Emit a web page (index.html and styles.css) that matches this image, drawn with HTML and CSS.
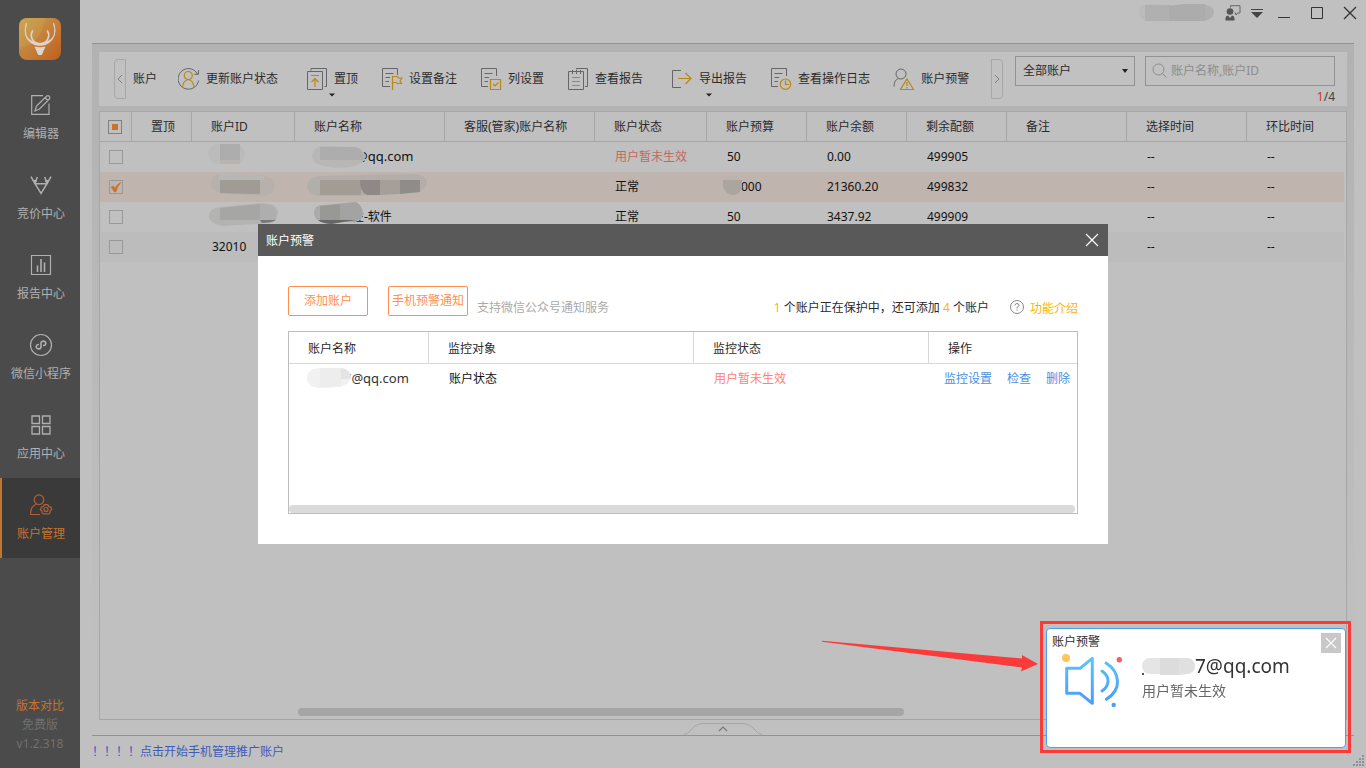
FILE: index.html
```html
<!DOCTYPE html>
<html lang="zh-CN">
<head>
<meta charset="utf-8">
<title>账户管理</title>
<link rel="stylesheet" href="styles.css">
</head>
<body>
<div class="app">
  <aside class="sidebar">
    <svg class="logo" viewBox="0 0 42 42" aria-hidden="true">
      <defs><linearGradient id="lg" x1="0" y1="0" x2="1" y2="1"><stop offset="0" stop-color="#c9a34e"/><stop offset=".5" stop-color="#c5803a"/><stop offset="1" stop-color="#be5f1d"/></linearGradient></defs>
      <rect width="42" height="42" rx="8" fill="url(#lg)"/>
      <path d="M0 30Q20 28 27 0H8Q0 0 0 8z" fill="#d0b060" opacity=".25"/>
      <path d="M7.500 5C3.500 17 9 27 21 27.500C33 27 38.500 17 34.500 5L36 12Q36 24 21 25.300Q6 24 6.300 12z" fill="#dcd6cf" stroke="#dcd6cf" stroke-width=".8" stroke-linejoin="round"/>
      <path d="M13.500 13C10.500 18 13 24 20 26.300M28.500 13C31.500 18 29 24 22 26.300" fill="none" stroke="#dcd6cf" stroke-width="1.500" stroke-linecap="round"/>
      <path d="M15.500 28.500Q21 30 26.500 28.500L22.800 37H19.200z" fill="#dcd6cf"/>
    </svg>
    <nav class="nav">
      <a class="nav-item" href="#"><svg class="nav-icon" viewBox="0 0 24 24"><path d="M14 2.700H2.700V21.300H20V10.500M6 18L7.500 13L17.500 3.200Q19 2 20.500 3.500Q21.500 5 20.300 6L10.500 16zM16 4.700L19 7.500"/></svg>编辑器</a>
      <a class="nav-item" href="#"><svg class="nav-icon" viewBox="0 0 24 24"><path stroke-width="1.500" d="M2 3.700L6 10.700H18L12 20.300L6 10.700M22 3.700L18 10.700M8.300 4L6 10M3 6.500L8 8.500M15.700 4L18 10M21 6.500L16 8.500"/></svg>竞价中心</a>
      <a class="nav-item" href="#"><svg class="nav-icon" viewBox="0 0 24 24"><path d="M2.500 2.500H21.500V21.500H2.500z"/><path stroke-width="1.600" d="M8.500 12.500V19M12 6V19M15.500 9.500V19"/></svg>报告中心</a>
      <a class="nav-item" href="#"><svg class="nav-icon" viewBox="0 0 24 24"><circle cx="12" cy="12" r="10.500"/><path stroke-width="1.600" d="M10 11.500A2.400 2.200 0 1 0 12 14V10A2.400 2.200 0 1 1 14 12.500"/></svg>微信小程序</a>
      <a class="nav-item" href="#"><svg class="nav-icon" viewBox="0 0 24 24"><path stroke-width="1.300" d="M3 3H10.500V10.500H3zM13.500 3H21V10.500H13.500zM3 13.500H10.500V21H3zM13.500 13.500H21V21H13.500z"/></svg>应用中心</a>
      <a class="nav-item active" href="#"><svg class="nav-icon" viewBox="0 0 24 24"><circle cx="10" cy="6.700" r="4.800"/><path d="M11 21.500H1.500Q1.500 13 7.500 11.200"/><path d="M15.200 11.700H18.800L19.700 13.600L22 14L22.700 16.500L21.200 18L20.800 20.500L18.500 21.200L17 20.500L15 21.200L13.200 20L12.900 18L11.400 16.500L12.500 14L14.500 13.600z"/><circle cx="17" cy="16.500" r="2"/></svg>账户管理</a>
    </nav>
    <div class="version"><a class="compare" href="#">版本对比</a><span>免费版</span><span>v1.2.318</span></div>
  </aside>

  <main class="main">
    <header class="titlebar">
      <svg class="user-mask" viewBox="0 0 80 20" aria-hidden="true"><path d="M10 2Q2 3 2 10T10 18H68Q78 17 77 9Q75 3 66 2Q50 1 36 3Z" fill="#bbb"/><path d="M8 3H34V19H8z" fill="#b0b0b0"/><path d="M32 4L48 2H68V19H32z" fill="#acacac"/><path d="M68 3Q77 4 77 10T68 19z" fill="#b0b0b0"/></svg>
      <button class="win-btn feedback" aria-label="反馈"><svg viewBox="0 0 16 16"><circle cx="5" cy="6.500" r="3.300" fill="#555"/><path d="M.5 15.500Q0 11 3 10.500L5 13L7 10.500Q10 11 9.500 15.500z" fill="#555"/><path d="M5.500 2.500V.7H15V8H12.500L11 10L10 7.500" fill="none" stroke="#666"/></svg></button>
      <button class="win-btn" aria-label="菜单"><svg viewBox="0 0 16 16"><path d="M2 4.500H14" stroke="#444"/><path d="M2 7H14L8 13z" fill="#444"/></svg></button>
      <button class="win-btn" aria-label="最小化"><svg viewBox="0 0 16 16"><path d="M2 12.500H14" stroke="#333"/></svg></button>
      <button class="win-btn" aria-label="最大化"><svg viewBox="0 0 16 16"><path d="M2.500 2.500H13.500V13.500H2.500z" fill="none" stroke="#333"/></svg></button>
      <button class="win-btn" aria-label="关闭窗口"><svg viewBox="0 0 16 16"><path d="M2 2L14 14M14 2L2 14" stroke="#333" stroke-width="1.300"/></svg></button>
    </header>

    <section class="panel">
      <div class="toolbar">
        <button class="scroll-btn prev" aria-label="向左"><svg viewBox="0 0 6 10"><path d="M5 1L1 5L5 9"/></svg></button>
        <div class="tools">
          <button class="tool first">账户</button>
          <button class="tool"><svg class="tool-icon" viewBox="0 0 22 24"><path d="M19.500 7A10.300 10.300 0 1 0 20.600 13.500M20.500 3V7.300H16.300"/><g class="accent"><circle cx="10.300" cy="8.500" r="4"/><path d="M4.500 20.500Q5 13.500 10.300 12.500Q15.500 13.500 16 20.500"/></g></svg>更新账户状态</button>
          <button class="tool has-menu"><svg class="tool-icon" viewBox="0 0 22 24"><path d="M5 3.500V1.500H20.500V19.500H18.500M1.500 4.500H16.500V22.500H1.500z"/><path class="accent" d="M5 8.500H13M9 20V11.500M5.500 15L9 11.500L12.500 15"/></svg>置顶<svg class="caret" viewBox="0 0 6 3"><path d="M0 0H6L3 3z"/></svg></button>
          <button class="tool"><svg class="tool-icon" viewBox="0 0 22 24"><path d="M9 19.500H1.500V1.500H16.500V8M4.500 6.500H12.500M4.500 10.500H9M4.500 14.500H8"/><path class="accent" d="M11.500 23V9.500H16L17.500 11H21L19 14L20.500 16.500H16.500L15 15.500H11.500"/></svg>设置备注</button>
          <button class="tool"><svg class="tool-icon" viewBox="0 0 22 24"><path d="M8 19.500H1.500V1.500H16.500V9M4.500 6.500H12.500M4.500 10.500H9M4.500 14.500H8"/><path class="accent" d="M10.500 12.500H20.500V22.500H10.500zM13 17L15 19L18.500 15.500"/></svg>列设置</button>
          <button class="tool"><svg class="tool-icon" viewBox="0 0 22 24"><path d="M9.500 2.500V1.500H20.500V19.500H18M1.500 4.500H16.500V22.500H1.500zM5.500 3V7M9.500 3V7M13.500 3V7"/><path class="accent" d="M5 10.500H13M5 14.500H13M5 18.500H13"/></svg>查看报告</button>
          <button class="tool has-menu"><svg class="tool-icon" viewBox="0 0 22 24"><path d="M10 3.500H1.500V20.500H10"/><path class="accent" d="M7 11.500H20M14.500 6L20 11.500L14.500 17"/></svg>导出报告<svg class="caret" viewBox="0 0 6 3"><path d="M0 0H6L3 3z"/></svg></button>
          <button class="tool"><svg class="tool-icon" viewBox="0 0 22 24"><path d="M8 19.500H1.500V1.500H16.500V9M4.500 6.500H12.500M4.500 10.500H9M4.500 14.500H8"/><g class="accent"><circle cx="15.500" cy="17.200" r="5.200"/><path d="M15.500 13.500V17.500H19"/></g></svg>查看操作日志</button>
          <button class="tool"><svg class="tool-icon" viewBox="0 0 22 24"><circle cx="8" cy="7" r="5"/><path d="M1 19.500Q1 13 5.500 11.500"/><path class="accent" d="M14 12L20.500 22.500H7.500zM14 15V19M14 20V21.500"/></svg>账户预警</button>
        </div>
        <button class="scroll-btn next" aria-label="向右"><svg viewBox="0 0 6 10"><path d="M1 1L5 5L1 9"/></svg></button>
        <div class="filters">
          <div class="select-wrap"><select aria-label="账户筛选"><option>全部账户</option></select><svg class="caret" viewBox="0 0 6 4"><path d="M0 0H6L3 4z"/></svg></div>
          <div class="search-col">
            <div class="search"><svg viewBox="0 0 16 16"><circle cx="6.500" cy="6.500" r="5.500"/><path d="M10.500 10.500L14.500 14.500"/></svg><input type="text" aria-label="搜索账户" placeholder="账户名称,账户ID"></div>
            <div class="pager"><b>1</b>/4</div>
          </div>
        </div>
      </div>

      <div class="grid-box">
        <table class="grid">
          <colgroup><col class="c-check"><col class="c-top"><col class="c-id"><col class="c-name"><col class="c-name"><col class="c-state"><col class="c-num"><col class="c-num"><col class="c-num"><col class="c-time"><col class="c-time"><col></colgroup>
          <thead><tr><th class="check"><input class="box mixed" type="checkbox" aria-label="全选"></th><th>置顶</th><th>账户ID</th><th>账户名称</th><th>客服(管家)账户名称</th><th>账户状态</th><th>账户预算</th><th>账户余额</th><th>剩余配额</th><th>备注</th><th>选择时间</th><th>环比时间</th></tr></thead>
          <tbody>
            <tr><td class="check"><input class="box" type="checkbox" aria-label="选择第1行"></td><td></td>
              <td><svg class="mask" viewBox="0 0 150 30" aria-hidden="true"><rect x="16" y="2" width="37" height="20" rx="10" fill="#bbb"/><path d="M28 2H48V18H28z" fill="#adadad"/><path d="M28 18H48V22H28z" fill="#bab4b0"/></svg></td>
              <td><span class="mail">@qq.com</span><svg class="mask" viewBox="0 0 150 30" aria-hidden="true"><path d="M25 4Q17 7 17 14T28 24L40 26Q68 26 70 16Q70 5 58 5z" fill="#b9b7b6"/><path d="M25 5H60Q69 7 69 18H25z" fill="#adadad"/></svg></td>
              <td></td><td class="bad">用户暂未生效</td><td>50</td><td>0.00</td><td>499905</td><td></td><td>--</td><td>--</td></tr>
            <tr class="selected"><td class="check"><input class="box" type="checkbox" checked aria-label="选择第2行"></td><td></td>
              <td><svg class="mask" viewBox="0 0 150 30" aria-hidden="true"><path d="M28 2L60 3Q82 2 82 13T70 24L32 22Q19 20 19 12T28 2z" fill="#b6b1ad"/><path d="M28 8H68V22L28 21z" fill="#a09b94"/><path d="M28 2L60 3L72 4V8H26z" fill="#b9b7b6"/></svg></td>
              <td><svg class="mask" viewBox="0 0 150 30" aria-hidden="true"><path d="M26 4Q12 6 12 14T26 24H60L122 20Q132 17 132 10Q131 3 120 2z" fill="#b2aeaa"/><path d="M25 8H66V23H25z" fill="#a29d94"/><path d="M65 8H85V23H72Q65 21 65 8z" fill="#8d8986"/><path d="M85 8H105V22L85 23z" fill="#a49f99"/><path d="M105 8H125V20L105 22z" fill="#8f8c89"/></svg></td>
              <td></td><td>正常</td><td><span class="tail">000</span><svg class="mask" viewBox="0 0 150 30" aria-hidden="true"><path d="M16 8H35V15Q33 23 26 23T16 15z" fill="#aaa69f"/><path d="M17 8Q22 4 29 4L35 8z" fill="#bab3ae"/></svg></td><td>21360.20</td><td>499832</td><td></td><td>--</td><td>--</td></tr>
            <tr><td class="check"><input class="box" type="checkbox" aria-label="选择第3行"></td><td></td>
              <td><svg class="mask" viewBox="0 0 150 30" aria-hidden="true"><path d="M28 5L70 1Q86 2 86 10T78 21L32 24Q17 22 17 14T28 5z" fill="#b3b3b2"/><path d="M28 6L68 2V18H28z" fill="#a6a6a4"/><path d="M68 2L80 3Q85 8 84 13V18H68z" fill="#aeaeae"/><path d="M68 18H84Q80 21 70 21z" fill="#777"/></svg></td>
              <td><span class="soft">性-软件</span><svg class="mask" viewBox="0 0 150 30" aria-hidden="true"><path d="M28 3L60 0Q69 4 68 13Q65 22 50 20L38 22Q20 21 19 12T28 3z" fill="#ababaa"/><path d="M25 4L45 2V18H25z" fill="#989895"/><path d="M45 2L61 0Q68 4 67 11L66 18H45z" fill="#a3a3a3"/><path d="M23 18H62L48 20L36 22Q26 21 23 18z" fill="#666"/></svg></td>
              <td></td><td>正常</td><td>50</td><td>3437.92</td><td>499909</td><td></td><td>--</td><td>--</td></tr>
            <tr class="alt"><td class="check"><input class="box" type="checkbox" aria-label="选择第4行"></td><td></td><td>32010</td><td></td><td></td><td></td><td></td><td></td><td></td><td></td><td>--</td><td>--</td></tr>
          </tbody>
        </table>
        <div class="scrollbar"></div>
      </div>
      <button class="drawer" aria-label="展开"><svg viewBox="0 0 78 13"><path d="M0 12.500Q4 12 7 8Q12 1.500 19 1.500H58Q66 1.500 71 8Q74 12 78 12.500" fill="none" stroke="#a6a6a6"/><path d="M35 9L39 5L43 9" fill="none" stroke="#777" stroke-width="1.200"/></svg></button>
    </section>

    <footer class="footer"><a href="#">！！！！点击开始手机管理推广账户</a></footer>
  </main>
</div>

<svg class="grip" viewBox="0 0 12 12" aria-hidden="true"><path d="M10 0h2v2h-2zM7 3h2v2h-2zM10 3h2v2h-2zM4 6h2v2h-2zM7 6h2v2h-2zM10 6h2v2h-2zM1 9h2v2h-2zM4 9h2v2h-2zM7 9h2v2h-2zM10 9h2v2h-2z" fill="#8f9199"/></svg>

<div class="overlay">
  <section class="dialog" role="dialog" aria-labelledby="dlg-title">
    <header class="dialog-head"><h2 id="dlg-title">账户预警</h2><button aria-label="关闭"><svg viewBox="0 0 14 14"><path d="M1 1L13 13M13 1L1 13"/></svg></button></header>
    <div class="dialog-body">
      <div class="dialog-bar">
        <button class="outline">添加账户</button>
        <button class="outline">手机预警通知</button>
        <span class="hint">支持微信公众号通知服务</span>
        <span class="quota"><em>1</em> 个账户正在保护中，还可添加 <em>4</em> 个账户</span>
        <a class="intro" href="#"><svg viewBox="0 0 14 14"><circle cx="7" cy="7" r="6.500"/><path d="M5 5.500Q5 3.500 7 3.500T9 5.300Q9 6.300 7 7.300V8.500M7 9.500V10.700"/></svg><span>功能介绍</span></a>
      </div>
      <div class="watch-box">
        <table class="watch">
          <colgroup><col class="w-name"><col class="w-target"><col class="w-state"><col></colgroup>
          <thead><tr><th>账户名称</th><th>监控对象</th><th>监控状态</th><th>操作</th></tr></thead>
          <tbody><tr><td><span class="mail">7@qq.com</span><svg class="mask" viewBox="0 0 150 30" aria-hidden="true"><path d="M30 4L54 4Q62 6 62 14L58 20Q50 24 30 24Q18 23 18 14T30 4z" fill="#f1f1f1"/><path d="M31 4H52V23H31z" fill="#ededed"/><path d="M52 4Q62 5 62 15H52z" fill="#e4e4e4"/></svg></td><td class="dark">账户状态</td><td class="bad">用户暂未生效</td><td class="ops"><a href="#">监控设置</a><a href="#">检查</a><a href="#">删除</a></td></tr></tbody>
        </table>
        <div class="watch-scroll"></div>
      </div>
    </div>
  </section>
</div>

<aside class="notice">
  <svg class="arrow" viewBox="0 0 220 40" aria-hidden="true"><path d="M3 2.800L203 20.500L203 17L219 26L202 33.500L203 29.500L3 3.800z" fill="#fb3b39"/></svg>
  <div class="toast" role="alert">
    <div class="toast-title">账户预警</div>
    <div class="toast-body">
      <svg class="speaker" viewBox="0 0 66 56" aria-hidden="true">
        <defs><linearGradient id="sg" x1="0" y1="0" x2="0" y2="56" gradientUnits="userSpaceOnUse"><stop offset=".1" stop-color="#5bc4fb"/><stop offset=".9" stop-color="#4a9bfd"/></linearGradient></defs>
        <g fill="none" stroke="url(#sg)" stroke-width="3" stroke-linejoin="round" stroke-linecap="round"><path d="M6.700 15.300H20L32.300 5.300V50.300L20 40.300H6.700z"/><path d="M42 18Q48 22 48 28T42 38"/><path d="M46 10Q57 17 57.500 28T46.300 46.300"/></g>
        <circle cx="6" cy="5" r="4" fill="#ffc65a"/><circle cx="59.300" cy="6.700" r="2.700" fill="#fb5d60"/><circle cx="53.700" cy="52" r="2.200" fill="#4a9bfd"/>
      </svg>
      <div class="toast-text"><div class="toast-mail">7@qq.com<svg viewBox="0 0 60 26" aria-hidden="true"><path d="M0 20h2v2h-2z" fill="#555"/><rect x="0" y="5" width="53" height="16" rx="8" fill="#e5e5e5"/><path d="M18 5H37V22H18z" fill="#dcdcdc"/><path d="M37 5H45Q53 7 53 13T45 21L37 22z" fill="#e0e0e0"/></svg></div><div class="toast-msg">用户暂未生效</div></div>
    </div>
    <button class="toast-close" aria-label="关闭提醒"><svg viewBox="0 0 14 14"><path d="M2 2L12 12M12 2L2 12"/></svg></button>
  </div>
</aside>
</body>
</html>
```
FILE: styles.css
```css
* { box-sizing: border-box; }
body { margin: 0; font: 12px/18px "Noto Sans", "Noto Sans CJK SC", sans-serif; color: #2b2b2b; background: #c0c0c0; overflow: hidden; }
button, input, select { font: inherit; color: inherit; background: none; border: 0; padding: 0; margin: 0; }
button, a { cursor: pointer; }
a { text-decoration: none; }
svg { display: block; }

.app { display: flex; height: 100vh; }

/* Sidebar */
.sidebar { width: 80px; flex: none; display: flex; flex-direction: column; background: #4b4b4b; color: #b0b0b0; }
.logo { width: 42px; height: 42px; margin: 18px 0 18px 19px; }
.nav-item { display: flex; flex-direction: column; align-items: center; gap: 8px; height: 80px; padding-top: 15px; color: inherit; border-left: 2px solid transparent; white-space: nowrap; }
.nav-icon { width: 24px; height: 24px; fill: none; stroke: currentColor; stroke-width: 1.2; }
.nav-item.active { background: #3a3a3a; color: #c4752d; border-color: #c4752d; }
.nav-item.active .nav-icon { stroke: #b45f35; }
.version { margin-top: auto; padding-bottom: 15px; display: flex; flex-direction: column; align-items: center; line-height: 19px; color: #707070; }
.compare { color: #c4752d; }

/* Window frame */
.main { flex: 1; min-width: 0; display: flex; flex-direction: column; }
.titlebar { height: 43px; flex: none; display: flex; justify-content: flex-end; padding: 5px 8px 0 0; }
.user-mask { width: 80px; height: 20px; margin-top: -3px; }
.win-btn { height: 16px; margin-left: 17px; }
.win-btn svg { width: 16px; height: 16px; }
.win-btn.feedback { margin-left: 8px; }
.win-btn.feedback + .win-btn { margin-left: 8px; }
.win-btn.feedback + .win-btn + .win-btn { margin-left: 11px; }
.panel { flex: 1; min-height: 0; margin: 0 12px; padding: 8px 7px 0; display: flex; flex-direction: column; border-top: 1px solid #929292; background: linear-gradient(#b2b2b2, #bababa 50%, #c0c0c0 90%); }
.footer { height: 33px; flex: none; margin: 0 12px; padding-top: 7px; border-top: 1px solid #929292; }
.footer a { color: #3e5bb8; }

/* Toolbar */
.toolbar { height: 54px; flex: none; display: flex; align-items: center; padding: 0 12px 0 15px; background: #c1c1c1; }
.tools { display: flex; align-items: center; margin-left: 7px; margin-right: 22px; }
.tool { position: relative; display: flex; align-items: center; gap: 6px; height: 24px; margin-right: 23px; white-space: nowrap; }
.tool.first { margin-right: 21px; }
.tool:last-child { margin-right: 0; }
.tool.has-menu { margin-left: 5px; }
.tool-icon { width: 22px; height: 24px; fill: none; stroke: #666; }
.accent { fill: none; stroke: #b98716; stroke-width: 1.2; }
.caret { width: 6px; height: 4px; fill: #222; }
.tool .caret { position: absolute; left: 50%; top: 26px; margin-left: -3px; }
.scroll-btn { flex: none; width: 12px; height: 40px; display: flex; align-items: center; justify-content: center; border: 1px solid #a6a6a6; }
.scroll-btn svg { flex: none; width: 6px; height: 10px; fill: none; stroke: #808080; }
.scroll-btn.prev { border-radius: 4px 0 0 4px; }
.scroll-btn.next { border-radius: 0 4px 4px 0; }
.filters { margin-left: auto; align-self: flex-start; padding-top: 4px; display: flex; gap: 10px; }
.select-wrap { position: relative; width: 120px; height: 30px; }
.select-wrap select { width: 100%; height: 100%; padding: 0 7px; border: 1px solid #929292; appearance: none; }
.select-wrap .caret { position: absolute; right: 7px; top: 13px; }
.search { width: 190px; height: 30px; display: flex; align-items: center; gap: 3px; padding: 0 6px; border: 1px solid #929292; }
.search svg { flex: none; width: 16px; height: 16px; fill: none; stroke: #8c8c8c; }
.search input { min-width: 0; flex: 1; outline: 0; }
.search input::placeholder { color: #8c8c8c; }
.pager { line-height: 22px; text-align: right; color: #444; }
.pager b { font-weight: 400; color: #c43c2c; }

/* Account grid */
.grid-box { flex: 1; min-height: 0; margin-top: 5px; display: flex; flex-direction: column; border: 1px solid #a6a6a6; background: #c0c0c0; }
table { width: 100%; table-layout: fixed; border-spacing: 0; }
th, td { position: relative; height: 30px; padding: 0; text-align: left; font-weight: 400; white-space: nowrap; }
th { padding-left: 19px; }
td { padding-left: 20px; color: #111; }
.grid th { border-right: 1px solid #a6a6a6; border-bottom: 1px solid #a6a6a6; color: #2b2b2b; }
.grid th:last-child { border-right: 0; }
.grid td:last-child { border-right: 2px solid #c0c0c0; }
.grid .check { padding-left: 8px; }
.grid td.check { padding-left: 9px; }
.c-check { width: 32px; }
.c-top { width: 60px; }
.c-id { width: 103px; }
.c-name { width: 150px; }
.c-state { width: 112px; }
.c-num { width: 100px; }
.c-time { width: 120px; }
.selected td { background: #c0b4ae; }
.alt td { background: #bcbcbc; }
.grid .bad { color: #c4685c; }
.box { appearance: none; display: block; width: 14px; height: 14px; border: 1px solid #999; }
.box.mixed { background: #c9722a content-box; padding: 3px; border-color: #808080; }
.box:checked { background: no-repeat center / 12px 12px url("data:image/svg+xml,%3Csvg xmlns='http://www.w3.org/2000/svg' viewBox='0 0 12 12'%3E%3Cpath d='M1 6L3.500 5L5 7.500Q7 3 11 1Q7.500 5 6 11H4.500z' fill='%23c9722a' stroke='%23c9722a' stroke-width='.5'/%3E%3C/svg%3E"); }
.mask { position: absolute; left: 0; top: 0; width: 150px; height: 30px; }
.mail { font-size: 13px; line-height: 16px; margin-left: 41px; }
.tail { margin-left: 14px; }
.soft { margin-left: 37px; }
.scrollbar { height: 8px; margin: auto 442px 3px 198px; border-radius: 4px; background: #a5a5a5; }
.drawer { flex: none; height: 15px; display: flex; align-items: flex-end; justify-content: center; }
.drawer svg { width: 78px; height: 13px; }
.grip { position: absolute; right: 2px; bottom: 1px; width: 12px; height: 12px; }

/* Dialog */
.overlay { position: fixed; inset: 0; display: flex; align-items: center; justify-content: center; }
.dialog { width: 850px; background: #fff; }
.dialog-head { height: 32px; padding: 0 9px 0 8px; display: flex; align-items: center; justify-content: space-between; background: #595959; color: #fff; }
.dialog-head h2 { margin: 0; font-size: 12px; line-height: 20px; padding-top: 1px; font-weight: 400; }
.dialog-head svg { width: 14px; height: 14px; stroke: #fff; stroke-width: 1.2; }
.dialog-body { padding: 30px; }
.dialog-bar { display: flex; align-items: flex-end; height: 30px; margin-bottom: 15px; line-height: 17px; }
.outline { width: 80px; height: 30px; margin-right: 20px; padding-bottom: 1px; border: 1px solid #ff8f50; border-radius: 2px; color: #ff8f50; white-space: nowrap; }
.outline + .outline { margin-right: 9px; }
.hint { color: #aaa; }
.quota { margin-left: auto; }
.quota em { font-style: normal; color: #ffb400; }
.intro { display: flex; align-items: center; gap: 6px; margin-left: 21px; color: #ffb400; }
.intro span { padding-top: 3px; margin-bottom: -1px; }
.intro svg { width: 14px; height: 14px; fill: none; stroke: #888; }
.watch-box { height: 183px; display: flex; flex-direction: column; border: 1px solid #bdbdbd; }
.watch th { height: 32px; padding-top: 2px; border-right: 1px solid #d8d8d8; border-bottom: 1px solid #d8d8d8; }
.watch th:last-child { border-right: 0; }
.watch td { color: #333; }
.watch td.dark { color: #111; }
.watch td.bad { color: #fd8273; }
.watch .mail { margin-left: 35px; }
.w-name { width: 140px; }
.w-target { width: 265px; }
.w-state { width: 235px; }
.watch td.ops { padding-left: 15px; }
.ops a { color: #4a90e2; margin-right: 15px; }
.ops a:last-child { margin-right: 0; }
.watch-scroll { height: 8px; margin: auto 2px 0 0; border-radius: 4px; background: #dadada; }

/* Notification */
.notice { position: fixed; right: 15px; bottom: 15px; width: 311px; height: 132px; padding: 4px 2px 2px 3px; border: 3px solid #fb3b39; }
.arrow { position: absolute; right: 100%; top: 14px; width: 220px; height: 40px; margin-right: 4px; }
.toast { position: relative; width: 300px; height: 120px; border: 1px solid #4f9cf5; border-radius: 4px; background: #fff; }
.toast-title { padding: 2px 0 0 5px; line-height: 22px; }
.toast-body { display: flex; gap: 16px; padding-left: 13px; }
.speaker { width: 66px; height: 56px; }
.toast-mail { position: relative; padding-left: 53px; font-size: 19px; line-height: 26px; color: #333; }
.toast-mail svg { position: absolute; left: 0; top: 0; width: 60px; height: 26px; }
.toast-msg { font-size: 14px; line-height: 24px; color: #666; }
.toast-close { position: absolute; right: 4px; top: 4px; width: 20px; height: 20px; padding: 3px; background: #c8c8c8; }
.toast-close svg { width: 14px; height: 14px; stroke: #fff; stroke-width: 1.2; }
```
